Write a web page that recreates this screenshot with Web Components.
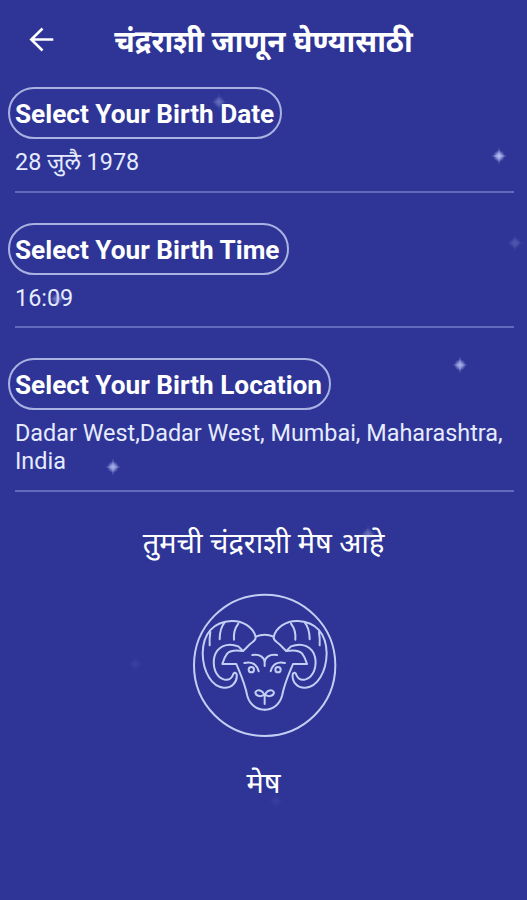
<!DOCTYPE html>
<html lang="mr">
<head>
<meta charset="utf-8">
<title>चंद्रराशी</title>
<style>
html,body{margin:0;height:100%;background:#2e3596}
body{font-family:Roboto,"Noto Sans",sans-serif;color:#fff}
</style>
</head>
<body>
<rashi-screen>
  <app-header slot="header">चंद्रराशी जाणून घेण्यासाठी</app-header>
  <birth-field label="Select Your Birth Date" style="--w:274px">28 जुलै 1978</birth-field>
  <birth-field label="Select Your Birth Time" style="--w:281px">16:09</birth-field>
  <birth-field label="Select Your Birth Location" style="--w:323px">Dadar West,Dadar West, Mumbai, Maharashtra, India</birth-field>
  <rashi-result slot="result" name="मेष">तुमची चंद्रराशी मेष आहे</rashi-result>
</rashi-screen>
<script>
class Base extends HTMLElement{
  constructor(){super();this.attachShadow({mode:'open'});}
  connectedCallback(){this.shadowRoot.innerHTML=this.view();}
}
customElements.define('star-spark',class extends Base{
  view(){return `<style>
:host{position:absolute;width:20px;height:20px;margin:-10px 0 0 -10px;pointer-events:none}
svg{display:block}</style>
<svg width="20" height="20" viewBox="-10 -10 20 20"><defs><radialGradient id="g"><stop offset="0" stop-color="#c9d0ff"/><stop offset=".45" stop-color="#a9b3ee" stop-opacity=".75"/><stop offset="1" stop-color="#8d98e0" stop-opacity="0"/></radialGradient></defs>
<circle r="6" fill="url(#g)"/><path d="M0-9 1.2-1.2 8 0 1.2 1.2 0 9-1.2 1.2-8 0-1.2-1.2Z" fill="#a9b3ee" opacity=".5"/></svg>`;}
});
customElements.define('app-header',class extends Base{
  view(){return `<style>
:host{display:grid;grid-template-columns:84px 1fr 84px;align-items:center;height:87px;box-sizing:border-box;padding-bottom:8px}
svg{display:block;margin-left:26px}
h1{margin:0;font:700 29.6px/40px "Noto Sans",sans-serif;white-space:nowrap;text-align:center;padding-top:2px}</style>
<svg width="30" height="30" viewBox="0 0 30 30" fill="none" stroke="#fff" stroke-width="2.6"><path d="M27.3 14.5H5.5M16.5 3.5 5.3 14.5l11.2 11"/></svg>
<h1><slot></slot></h1>`;}
});
customElements.define('birth-field',class extends Base{
  view(){return `<style>
:host{display:block;padding:0 13px 30px 8px}
.pill{box-sizing:border-box;width:var(--w);height:52px;border:2px solid #aab2e2;border-radius:26px;display:flex;align-items:center;padding:2px 0 0 5px;font-weight:700;font-size:26.2px;white-space:nowrap}
.value{font-size:23.4px;line-height:28px;padding:9px 0 14.5px 7px;color:#e6ebff;min-height:28px}
.rule{height:2px;margin-left:7px;background:#626abb}</style>
<div class="pill">${this.getAttribute('label')}</div><div class="value"><slot></slot></div><div class="rule"></div>`;}
});
customElements.define('aries-icon',class extends Base{
  view(){
    const half=`<path d="M218 155C210 126 180 107 146 108C92 110 60 145 59 205C60 262 87 305 122 308C145 310 164 292 161 268C158 260 151 262 149 272C143 284 132 286 122 283C98 275 88 245 94 216C102 185 132 171 166 184L180 198C189 191 196 180 209 171C217 165 219 160 218 155"/>
<path d="M180 198C162 195 144 194 133 205C124 216 121 227 118 237H160C170 262 185 292 193 333C200 358 220 374 245 374"/>
<path d="M80 181C79 165 80 153 82 141M110 163C110 142 115 124 125 112M153 164C151 145 156 129 166 116"/>
<path d="M184 234C207 228 222 239 227 259M208 210C228 207 240 214 245 228"/>
<circle cx="205" cy="254" r="8"/>
<path d="M245 332C239 314 222 312 217 322C219 336 236 336 245 328"/>`;
    return `<style>:host{display:block}svg{display:block}</style>
<svg width="162" height="160" viewBox="0 0 486 480" fill="none" stroke="#c3cef5" stroke-width="6" stroke-linecap="round" stroke-linejoin="round">
<circle cx="245" cy="241" r="212"/><g>${half}</g><g transform="matrix(-1 0 0 1 490 0)">${half}</g>
<path d="M218 155Q245 143 272 155M245 226V243M245 332V357"/></svg>`;}
});
customElements.define('rashi-result',class extends Base{
  view(){return `<style>
:host{display:flex;flex-direction:column;align-items:center;margin-top:.5px;font-family:"Noto Sans",sans-serif;font-size:29px;line-height:40px;white-space:nowrap}
aries-icon{margin:23px 0 17px}</style>
<div><slot></slot></div><aries-icon></aries-icon><div>${this.getAttribute('name')}</div>`;}
});
customElements.define('rashi-screen',class extends Base{
  view(){
    const stars=[[499,156,1],[460,365,.9],[113,467,.9],[219,102,.4],[515,243,.25],[57,299,.5],[368,534,.4],[135,664,.08],[276,801,.06]];
    return `<style>
:host{display:block;position:relative;box-sizing:border-box;height:900px;overflow:hidden;background:#2e3596}
</style><slot name="header"></slot><slot></slot><slot name="result"></slot>
${stars.map(([x,y,o])=>`<star-spark style="left:${x}px;top:${y}px;opacity:${o}"></star-spark>`).join('')}`;}
});
</script>
</body>
</html>
